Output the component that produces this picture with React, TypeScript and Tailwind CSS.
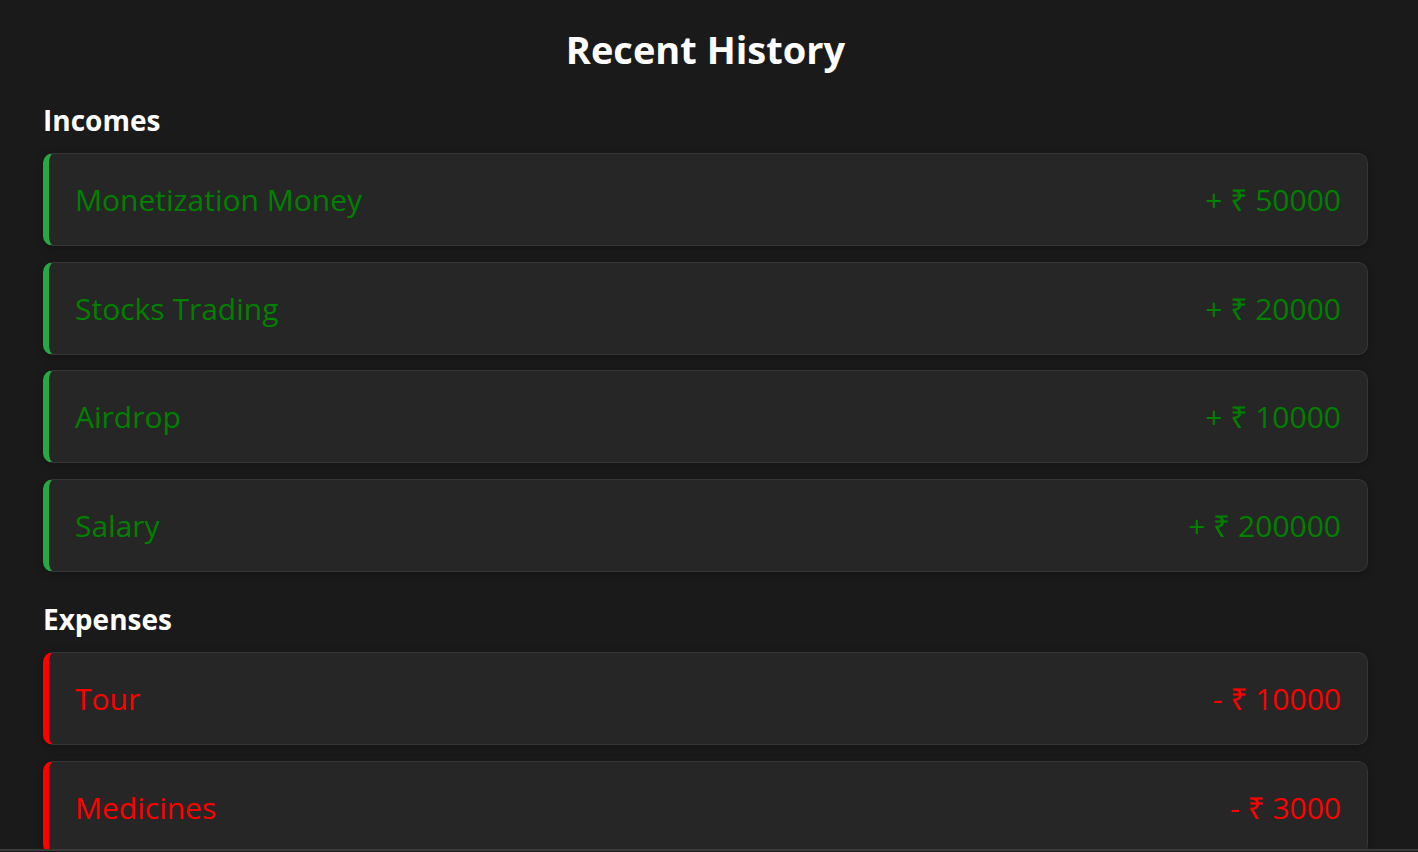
import React from "react";

interface Entry {
  title: string;
  amount: number;
}

const incomes: Entry[] = [
  { title: "Monetization Money", amount: 50000 },
  { title: "Stocks Trading", amount: 20000 },
  { title: "Airdrop", amount: 10000 },
  { title: "Salary", amount: 200000 },
];

const expenses: Entry[] = [
  { title: "Tour", amount: 10000 },
  { title: "Medicines", amount: 3000 },
];

function HistoryItem({ item, type }: { item: Entry; type: "income" | "expense" }) {
  const isIncome = type === "income";
  return (
    <div
      className={
        "flex shrink-0 items-center justify-between h-[93px] px-[26px] rounded-[10px] border border-[#363636] border-l-[6px] bg-[#262626] shadow-[0_2px_8px_rgba(0,0,0,0.25)] " +
        (isIncome ? "border-l-[#28a745] text-[#008000]" : "border-l-[#ff0000] text-[#ff0000]")
      }
    >
      <span>{item.title}</span>
      <span>
        {isIncome ? "+" : "-"} ₹ {item.amount}
      </span>
    </div>
  );
}

export default function App() {
  return (
    <div
      className="h-[852px] overflow-hidden bg-[#1a1a1a] text-white"
      style={{ fontFamily: '"Open Sans", "Noto Sans", sans-serif' }}
    >
      <div className="h-[851px] overflow-hidden border-b-2 border-[#3a3a3a] pl-[43px] pr-[50px] pt-[22px]">
        <h1 className="text-center text-[38px] leading-[54px] font-bold">Recent History</h1>

        <h2 className="mt-[26px] text-[28px] leading-[36px] font-bold">Incomes</h2>
        <div className="mt-[15px] flex flex-col gap-[15.67px] text-[30px]">
          {incomes.map((item) => (
            <HistoryItem key={item.title} item={item} type="income" />
          ))}
        </div>

        <h2 className="mt-[29px] text-[28px] leading-[36px] font-bold">Expenses</h2>
        <div className="mt-[15px] flex flex-col gap-[15.67px] text-[30px]">
          {expenses.map((item) => (
            <HistoryItem key={item.title} item={item} type="expense" />
          ))}
        </div>
      </div>
    </div>
  );
}
